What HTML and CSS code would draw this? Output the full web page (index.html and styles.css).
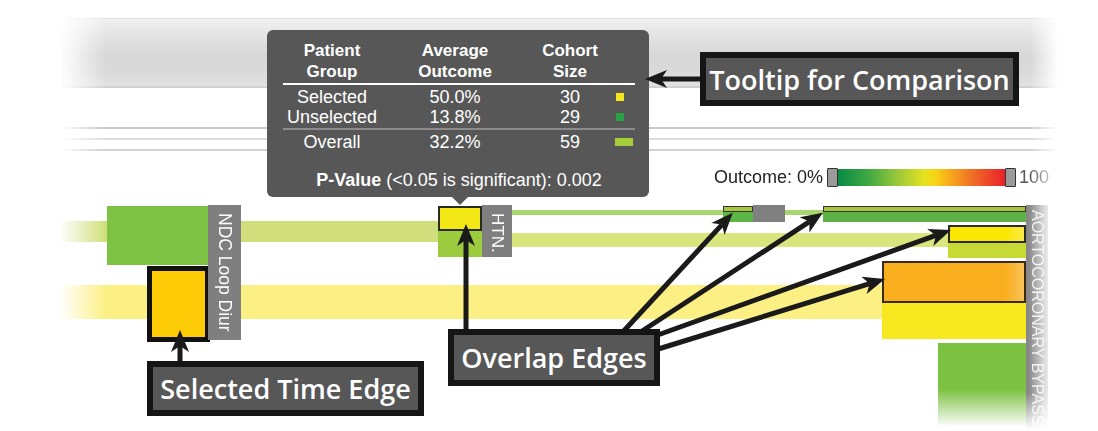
FILE: index.html
```html
<!DOCTYPE html>
<html lang="en">
<head>
<meta charset="utf-8">
<title>Tooltip for Comparison</title>
<link rel="stylesheet" href="styles.css">
</head>
<body>
<div class="canvas">
  <div class="scene">
    <div class="header-band"></div>
    <div class="rule rule-1"></div>
    <div class="rule rule-2"></div>
    <div class="rule rule-3"></div>

    <div class="legend">
      <span class="legend-label">Outcome: 0%</span>
      <span class="scale"><span class="handle"></span><span class="ramp"></span><span class="handle"></span></span>
      <span class="legend-max">100</span>
    </div>

    <div class="track track-green-left"></div>
    <div class="track track-green-thin"></div>
    <div class="track track-green-right"></div>
    <div class="track track-yellow"></div>

    <div class="node ndc-block"></div>
    <div class="node ndc-selected"></div>
    <div class="vlabel ndc-label">NDC Loop Diur</div>

    <div class="node htn-sel"></div>
    <div class="node htn-rest"></div>
    <div class="vlabel htn-label">HTN.</div>

    <div class="node small-edge"></div>
    <div class="node small-fill"></div>
    <div class="node small-gray"></div>

    <div class="node long-edge"></div>
    <div class="node long-fill"></div>

    <div class="node bypass-yellow"></div>
    <div class="node bypass-lime"></div>
    <div class="node bypass-orange"></div>
    <div class="node bypass-yellow-fill"></div>
    <div class="node bypass-green"></div>
    <div class="vlabel bypass-label">AORTOCORONARY BYPASS</div>
  </div>

  <div class="tooltip">
    <div class="tt-table">
      <div class="tt-head">Patient<br>Group</div>
      <div class="tt-head">Average<br>Outcome</div>
      <div class="tt-head">Cohort<br>Size</div>
      <div class="tt-head"></div>
      <div class="tt-rule tt-rule-strong"></div>
      <div>Selected</div><div>50.0%</div><div>30</div><div class="swatch-cell"><span class="swatch swatch-sel"></span></div>
      <div>Unselected</div><div>13.8%</div><div>29</div><div class="swatch-cell"><span class="swatch swatch-unsel"></span></div>
      <div class="tt-rule tt-rule-soft"></div>
      <div>Overall</div><div>32.2%</div><div>59</div><div class="swatch-cell"><span class="swatch swatch-all"></span></div>
    </div>
    <p class="tt-pvalue"><b>P-Value</b> (&lt;0.05 is significant): 0.002</p>
  </div>

  <svg class="arrows" width="1098" height="431" viewBox="0 0 1098 431">
    <defs>
      <marker id="head" markerUnits="userSpaceOnUse" markerWidth="22" markerHeight="20" viewBox="0 0 22 20" refX="6" refY="10" orient="auto">
        <path d="M0,1 L22,10 L0,19 L6,10 Z" fill="#1a1a1a"/>
      </marker>
    </defs>
    <line class="arrow" x1="704" y1="79" x2="661" y2="79"/>
    <line class="arrow" x1="180" y1="364" x2="180" y2="346"/>
    <line class="arrow" x1="466" y1="333" x2="466" y2="240"/>
    <line class="arrow" x1="620" y1="335" x2="722" y2="224.6"/>
    <line class="arrow" x1="636" y1="335" x2="809.5" y2="221.6"/>
    <line class="arrow" x1="655" y1="336" x2="935.9" y2="235.4"/>
    <line class="arrow" x1="655" y1="350" x2="869.7" y2="283.7"/>
  </svg>

  <div class="callout callout-tooltip">Tooltip for Comparison</div>
  <div class="callout callout-selected">Selected Time Edge</div>
  <div class="callout callout-overlap">Overlap Edges</div>
</div>
</body>
</html>
```

FILE: styles.css
```css
* { box-sizing: border-box; }

body {
  margin: 0;
  background: #ffffff;
}

.canvas {
  position: relative;
  width: 1098px;
  height: 431px;
  overflow: hidden;
  background: #ffffff;
  font-family: "Liberation Sans", Arial, sans-serif;
}

/* ---------- underlying visualisation (faded at left and right) ---------- */
.scene {
  position: absolute;
  inset: 0;
  -webkit-mask-image: linear-gradient(to right, transparent 60px, #000 106px, #000 1030px, transparent 1058px);
  mask-image: linear-gradient(to right, transparent 60px, #000 106px, #000 1030px, transparent 1058px);
}

.header-band {
  position: absolute;
  left: 0;
  top: 18px;
  width: 1098px;
  height: 70px;
  border-top: 1px solid #e2e2e2;
  border-bottom: 2px solid #d0d0d0;
  background: linear-gradient(#f1f1f1, #e3e3e3 25%, #d7d7d7 55%, #dadada 80%, #e2e2e2);
}

.rule {
  position: absolute;
  left: 0;
  width: 1098px;
  height: 2px;
}
.rule-1 { top: 127px; background: #cbcbcb; }
.rule-2 { top: 138px; background: #dcdcdc; }
.rule-3 { top: 149px; background: #d2d2d2; }

/* legend */
.legend {
  position: absolute;
  left: 714px;
  top: 168px;
  height: 19px;
  display: flex;
  align-items: center;
  font-size: 18px;
  color: #222;
}
.legend-label { margin-right: 4px; }
.scale {
  display: flex;
  align-items: center;
  height: 19px;
}
.handle {
  width: 11px;
  height: 19px;
  background: #9a9a9a;
  border: 1.5px solid #333;
  border-radius: 1px;
}
.ramp {
  width: 167px;
  height: 17px;
  background: linear-gradient(to right, #078a45 0%, #3ea843 18%, #9cc93a 36%, #e6e21e 52%, #f7d515 58%, #f59d20 70%, #ef5f26 84%, #e8212b 100%);
}
.legend-max {
  margin-left: 3px;
  color: #555;
}

/* tracks (edges between nodes) */
.track { position: absolute; }
.track-green-left  { left: 0;     top: 221px; width: 438px; height: 21px; background: #d0df7b; }
.track-green-thin  { left: 512px; top: 210px; width: 514px; height: 5px;  background: #a9d56f; }
.track-green-right { left: 512px; top: 233px; width: 436px; height: 14px; background: #d9e57d; }
.track-yellow      { left: 0;     top: 285px; width: 882px; height: 34px; background: #fcef84; }

/* nodes */
.node { position: absolute; }

.ndc-block    { left: 107px; top: 206px; width: 101px; height: 59px; background: #7dc243; }
.ndc-selected { left: 147px; top: 266px; width: 63px;  height: 76px; background: #fdcb05; border: 5px solid #111; }

.htn-sel  { left: 438px; top: 206px; width: 44px; height: 25px; background: #f4e716; border: 2px solid #2a2a2a; }
.htn-rest { left: 438px; top: 231px; width: 44px; height: 26px; background: #9ccb3d; }

.small-edge { left: 723px; top: 206px; width: 30px; height: 6px;  background: #a5c83c; border: 1.5px solid #333; }
.small-fill { left: 723px; top: 212px; width: 30px; height: 10px; background: #5db548; }
.small-gray { left: 753px; top: 205px; width: 32px; height: 17px; background: #808080; }

.long-edge { left: 823px; top: 206px; width: 203px; height: 6px;  background: #a8c43c; border: 1.5px solid #333; }
.long-fill { left: 823px; top: 212px; width: 203px; height: 10px; background: #5db147; }

.bypass-yellow      { left: 948px; top: 225px; width: 78px;  height: 18px; background: linear-gradient(to right, #fbe600 75%, #fbea4a); border: 2px solid #2a2a2a; }
.bypass-lime        { left: 948px; top: 243px; width: 78px;  height: 15px; background: #c6d935; }
.bypass-orange      { left: 882px; top: 261px; width: 144px; height: 42px; background: linear-gradient(to right, #f9ae1d 86%, #fac258); border: 2px solid #3a2a10; }
.bypass-yellow-fill { left: 882px; top: 303px; width: 144px; height: 36px; background: #f8e820; }
.bypass-green       { left: 938px; top: 343px; width: 88px;  height: 84px; background: linear-gradient(#7cc142 0%, #7cc142 55%, rgba(124, 193, 66, 0) 100%); }

/* vertical labels */
.vlabel {
  position: absolute;
  writing-mode: vertical-rl;
  color: #ffffff;
  font-size: 17px;
  white-space: nowrap;
  overflow: hidden;
  background: #7f7f7f;
}
.ndc-label { left: 208px; top: 205px; width: 33px; height: 135px; line-height: 33px; padding-top: 8px; font-size: 17.5px; }
.htn-label { left: 482px; top: 205px; width: 30px; height: 52px; line-height: 30px; padding-top: 8px; }
.bypass-label {
  left: 1026px;
  top: 205px;
  width: 22px;
  height: 224px;
  line-height: 22px;
  padding-top: 5px;
  font-size: 16px;
  color: rgba(255, 255, 255, 0.85);
  background: linear-gradient(to right, #858585, #9e9e9e 60%, #c4c4c4);
  -webkit-mask-image: linear-gradient(#000 0%, #000 84%, transparent 100%);
  mask-image: linear-gradient(#000 0%, #000 84%, transparent 100%);
}

/* ---------- tooltip ---------- */
.tooltip {
  position: absolute;
  left: 267px;
  top: 30px;
  width: 382px;
  height: 167px;
  padding: 10px 14px 0 16px;
  background: #575757;
  border-radius: 6px;
  color: #ffffff;
}
.tooltip::after {
  content: "";
  position: absolute;
  left: 185px;
  bottom: -8px;
  border-left: 8px solid transparent;
  border-right: 8px solid transparent;
  border-top: 8px solid #575757;
}
.tt-table {
  display: grid;
  grid-template-columns: 98px 148px 82px 24px;
  font-size: 18px;
  line-height: 20px;
  text-align: center;
}
.tt-head {
  font-weight: bold;
  font-size: 17px;
  line-height: 21px;
}
.tt-rule { grid-column: 1 / -1; height: 2px; }
.tt-rule-strong { margin: 1px 0 2px; background: #ffffff; }
.tt-rule-soft { margin: 1px 0 2px; background: #8c8c8c; }
.swatch-cell {
  display: flex;
  align-items: center;
  justify-content: flex-start;
  padding-left: 5px;
}
.swatch { display: block; height: 8px; }
.swatch-sel   { width: 8px;  background: #f5e51b; }
.swatch-unsel { width: 8px;  background: #27a046; }
.swatch-all   { width: 18px; margin-left: -1px; background: #a5cd39; }
.tt-pvalue {
  margin: 18px 0 0;
  font-size: 18px;
  line-height: 20px;
  text-align: center;
}

/* ---------- arrows ---------- */
.arrows {
  position: absolute;
  left: 0;
  top: 0;
}
.arrow {
  stroke: #1a1a1a;
  stroke-width: 5;
  marker-end: url(#head);
}

/* ---------- callouts ---------- */
.callout {
  position: absolute;
  display: flex;
  align-items: center;
  justify-content: center;
  background: #575757;
  border: 6px solid #151515;
  color: #ffffff;
  font-family: "Open Sans", "Liberation Sans", sans-serif;
  font-weight: 600;
  font-size: 27px;
  line-height: 1;
  white-space: nowrap;
}
.callout-tooltip  { left: 700px; top: 52px;  width: 319px; height: 54px; }
.callout-selected { left: 147px; top: 361px; width: 277px; height: 55px; }
.callout-overlap  { left: 448px; top: 329px; width: 212px; height: 57px; }
```
